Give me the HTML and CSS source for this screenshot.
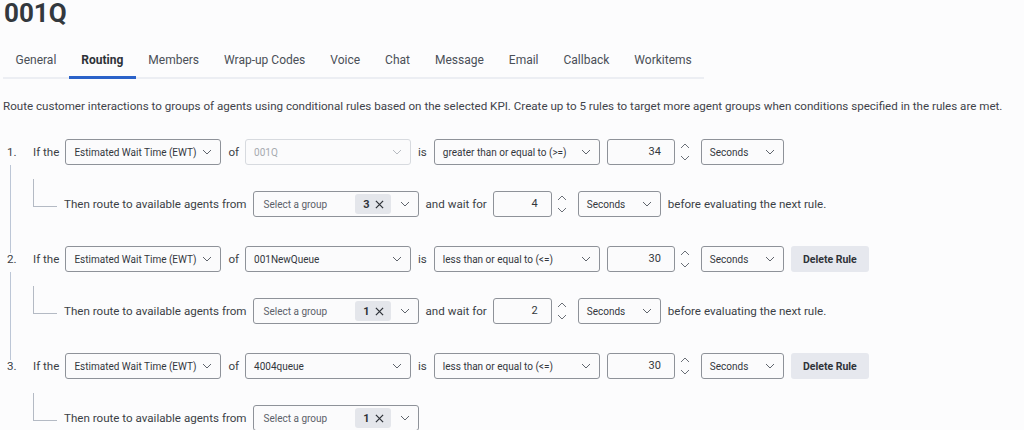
FILE: index.html
```html
<!DOCTYPE html>
<html lang="en">
<head>
    <meta charset="UTF-8">
    <title>001Q - Routing</title>
    <link rel="stylesheet" href="styles.css">
</head>
<body>
    <h1 class="title">001Q</h1>

    <ul class="tabs">
        <li class="tab">General</li>
        <li class="tab active">Routing</li>
        <li class="tab">Members</li>
        <li class="tab">Wrap-up Codes</li>
        <li class="tab">Voice</li>
        <li class="tab">Chat</li>
        <li class="tab">Message</li>
        <li class="tab">Email</li>
        <li class="tab">Callback</li>
        <li class="tab">Workitems</li>
    </ul>

    <p class="desc">Route customer interactions to groups of agents using conditional rules based on the selected KPI. Create up to 5 rules to target more agent groups when conditions specified in the rules are met.</p>

    <ol class="rules">
        <li class="rule">
            <div class="rule-line">
                <span class="num">1.</span>
                <span class="label">If the</span>
                <div class="select kpi"><span>Estimated Wait Time (EWT)</span><svg class="chev" viewBox="0 0 10 6"><path d="M1 1l4 4 4-4"/></svg></div>
                <span class="label">of</span>
                <div class="select queue disabled"><span>001Q</span><svg class="chev" viewBox="0 0 10 6"><path d="M1 1l4 4 4-4"/></svg></div>
                <span class="label is">is</span>
                <div class="select op"><span>greater than or equal to (&gt;=)</span><svg class="chev" viewBox="0 0 10 6"><path d="M1 1l4 4 4-4"/></svg></div>
                <div class="number wide">34</div>
                <svg class="spin" viewBox="0 0 10 20"><path d="M1 6l4-4 4 4M1 14l4 4 4-4"/></svg>
                <div class="select unit"><span>Seconds</span><svg class="chev" viewBox="0 0 10 6"><path d="M1 1l4 4 4-4"/></svg></div>
            </div>
            <div class="then-line">
                <span class="connector"></span>
                <span class="label">Then route to available agents from</span>
                <div class="select group"><span class="placeholder">Select a group</span><span class="badge">3 <svg viewBox="0 0 10 10"><path d="M1 1l8 8M9 1l-8 8"/></svg></span><svg class="chev" viewBox="0 0 10 6"><path d="M1 1l4 4 4-4"/></svg></div>
                <span class="label">and wait for</span>
                <div class="number">4</div>
                <svg class="spin" viewBox="0 0 10 20"><path d="M1 6l4-4 4 4M1 14l4 4 4-4"/></svg>
                <div class="select unit"><span>Seconds</span><svg class="chev" viewBox="0 0 10 6"><path d="M1 1l4 4 4-4"/></svg></div>
                <span class="label">before evaluating the next rule.</span>
            </div>
        </li>
        <li class="rule">
            <div class="rule-line">
                <span class="num">2.</span>
                <span class="label">If the</span>
                <div class="select kpi"><span>Estimated Wait Time (EWT)</span><svg class="chev" viewBox="0 0 10 6"><path d="M1 1l4 4 4-4"/></svg></div>
                <span class="label">of</span>
                <div class="select queue"><span>001NewQueue</span><svg class="chev" viewBox="0 0 10 6"><path d="M1 1l4 4 4-4"/></svg></div>
                <span class="label is">is</span>
                <div class="select op"><span>less than or equal to (&lt;=)</span><svg class="chev" viewBox="0 0 10 6"><path d="M1 1l4 4 4-4"/></svg></div>
                <div class="number wide">30</div>
                <svg class="spin" viewBox="0 0 10 20"><path d="M1 6l4-4 4 4M1 14l4 4 4-4"/></svg>
                <div class="select unit"><span>Seconds</span><svg class="chev" viewBox="0 0 10 6"><path d="M1 1l4 4 4-4"/></svg></div>
                <button class="delete-btn">Delete Rule</button>
            </div>
            <div class="then-line">
                <span class="connector"></span>
                <span class="label">Then route to available agents from</span>
                <div class="select group"><span class="placeholder">Select a group</span><span class="badge">1 <svg viewBox="0 0 10 10"><path d="M1 1l8 8M9 1l-8 8"/></svg></span><svg class="chev" viewBox="0 0 10 6"><path d="M1 1l4 4 4-4"/></svg></div>
                <span class="label">and wait for</span>
                <div class="number">2</div>
                <svg class="spin" viewBox="0 0 10 20"><path d="M1 6l4-4 4 4M1 14l4 4 4-4"/></svg>
                <div class="select unit"><span>Seconds</span><svg class="chev" viewBox="0 0 10 6"><path d="M1 1l4 4 4-4"/></svg></div>
                <span class="label">before evaluating the next rule.</span>
            </div>
        </li>
        <li class="rule">
            <div class="rule-line">
                <span class="num">3.</span>
                <span class="label">If the</span>
                <div class="select kpi"><span>Estimated Wait Time (EWT)</span><svg class="chev" viewBox="0 0 10 6"><path d="M1 1l4 4 4-4"/></svg></div>
                <span class="label">of</span>
                <div class="select queue"><span>4004queue</span><svg class="chev" viewBox="0 0 10 6"><path d="M1 1l4 4 4-4"/></svg></div>
                <span class="label is">is</span>
                <div class="select op"><span>less than or equal to (&lt;=)</span><svg class="chev" viewBox="0 0 10 6"><path d="M1 1l4 4 4-4"/></svg></div>
                <div class="number wide">30</div>
                <svg class="spin" viewBox="0 0 10 20"><path d="M1 6l4-4 4 4M1 14l4 4 4-4"/></svg>
                <div class="select unit"><span>Seconds</span><svg class="chev" viewBox="0 0 10 6"><path d="M1 1l4 4 4-4"/></svg></div>
                <button class="delete-btn">Delete Rule</button>
            </div>
            <div class="then-line">
                <span class="connector"></span>
                <span class="label">Then route to available agents from</span>
                <div class="select group"><span class="placeholder">Select a group</span><span class="badge">1 <svg viewBox="0 0 10 10"><path d="M1 1l8 8M9 1l-8 8"/></svg></span><svg class="chev" viewBox="0 0 10 6"><path d="M1 1l4 4 4-4"/></svg></div>
            </div>
        </li>
    </ol>
</body>
</html>
```

FILE: styles.css
```css
* {
    margin: 0;
    padding: 0;
    box-sizing: border-box;
}

body {
    font-family: 'Roboto', 'Liberation Sans', sans-serif;
    background-color: #fcfcfd;
    color: #3b3f46;
    overflow: hidden;
}

.title {
    font-size: 26px;
    line-height: 26px;
    font-weight: 700;
    color: #33383e;
    padding-left: 4px;
}

/* Tabs */
.tabs {
    list-style: none;
    display: inline-flex;
    margin-top: 25px;
    margin-left: 3px;
    border-bottom: 2px solid #eceef3;
}

.tab {
    padding: 0 12.5px;
    height: 28px;
    line-height: 18px;
    font-size: 12px;
    color: #4a4f57;
    margin-bottom: -2px;
    border-bottom: 3px solid transparent;
}

.tab.active {
    font-weight: 700;
    color: #2e3238;
    border-bottom-color: #2a62c9;
}

.desc {
    font-size: 11.6px;
    line-height: 16px;
    margin: 19px 0 0 3px;
    color: #3f434a;
    white-space: nowrap;
}

/* Rules */
.rules {
    list-style: none;
    margin-top: 25px;
    padding-left: 7px;
}

.rule {
    position: relative;
    padding-bottom: 29px;
}

.rule:not(:last-child)::after {
    content: '';
    position: absolute;
    left: 3px;
    top: 26px;
    bottom: -7px;
    border-left: 1px solid #bcc6d6;
}

.rule-line,
.then-line {
    display: flex;
    align-items: center;
    height: 26px;
    font-size: 11.6px;
}

.then-line {
    margin-top: 26px;
    padding-left: 26px;
}

.num {
    width: 26px;
    color: #3b3f46;
}

.label {
    margin-right: 6px;
    white-space: nowrap;
}

.label.is {
    margin-right: 7px;
}

.connector {
    align-self: flex-start;
    width: 24px;
    height: 28px;
    margin-top: -12px;
    margin-right: 7px;
    border-left: 1px solid #b4bac4;
    border-bottom: 1px solid #b4bac4;
}

.select {
    display: flex;
    align-items: center;
    height: 26px;
    padding: 0 8px;
    margin-right: 7px;
    border: 1px solid #8e9299;
    border-radius: 3px;
    background-color: #fbfbfc;
    font-size: 10px;
    color: #33373d;
    white-space: nowrap;
}

.select > span:first-child {
    flex-grow: 1;
}

.select .chev {
    width: 10px;
    height: 6px;
    fill: none;
    stroke: #5f646c;
    stroke-width: 1;
    margin-left: 6px;
    flex-shrink: 0;
}

.select.kpi { width: 156px; }
.select.queue { width: 166px; }
.select.op { width: 166px; }
.select.unit { width: 83px; }
.select.group { width: 166px; padding: 0 8px 0 10px; }

.select.group .chev {
    margin-left: 9px;
}

.select.disabled {
    border-color: #d7dadf;
    color: #a6aab0;
}

.select.disabled .chev {
    stroke: #b7bbc1;
}

.placeholder {
    color: #5c6169;
}

.badge {
    display: inline-flex;
    align-items: center;
    height: 20px;
    padding: 0 7px 0 8px;
    background-color: #e4e6eb;
    border-radius: 3px;
    font-weight: 700;
    font-size: 11px;
    color: #2e3238;
}

.badge svg {
    width: 9px;
    height: 9px;
    margin-left: 5px;
    stroke: #2e3238;
    stroke-width: 1.4;
}

.number {
    width: 59px;
    height: 26px;
    line-height: 24px;
    padding-right: 13px;
    border: 1px solid #8e9299;
    border-radius: 3px;
    background-color: #fbfbfc;
    text-align: right;
    font-size: 11px;
    color: #33373d;
}

.number.wide {
    width: 68px;
}

.spin {
    width: 10px;
    height: 20px;
    margin: 0 11px 0 5px;
    fill: none;
    stroke: #6a6f77;
    stroke-width: 1;
}

.delete-btn {
    width: 78px;
    height: 26px;
    border: none;
    border-radius: 3px;
    background-color: #e6e8ee;
    font-family: inherit;
    font-size: 10.5px;
    font-weight: 700;
    color: #2f3339;
}
```
